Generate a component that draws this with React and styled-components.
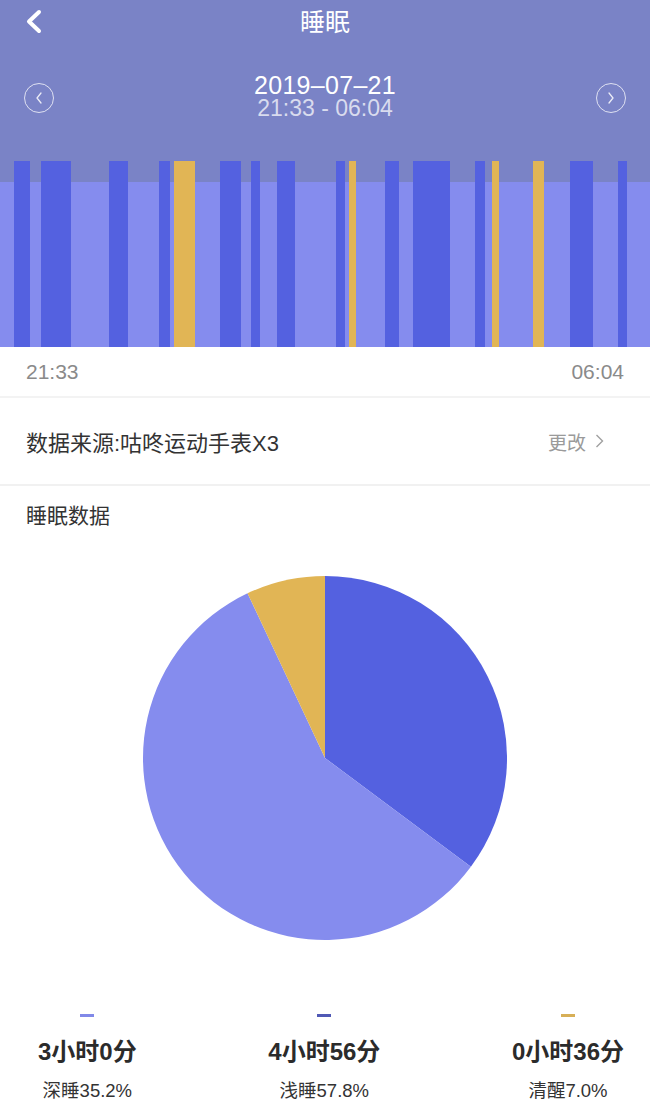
import React from "react";
import styled, { createGlobalStyle } from "styled-components";

const GlobalStyle = createGlobalStyle`
  html, body { margin: 0; padding: 0; background: #fff; }
  body { font-family: "Liberation Sans", "Noto Sans CJK SC", sans-serif; }
  * { box-sizing: border-box; }
`;

const COLORS = {
  header: "#7A83C6",
  light: "#858CEE",
  deep: "#5461E0",
  awake: "#E1B555",
};

const Page = styled.div`
  width: 650px;
  min-height: 1112px;
  background: #fff;
`;

const Header = styled.header`
  background: ${COLORS.header};
  color: #fff;
`;

const NavBar = styled.div`
  height: 46px;
  display: grid;
  grid-template-columns: 1fr auto 1fr;
  align-items: center;
  padding: 0 24px;
`;

const BackButton = styled.button`
  width: 24px;
  height: 28px;
  padding: 0;
  border: 0;
  background: none;
  display: flex;
  align-items: center;
  justify-content: flex-start;
  justify-self: start;
  margin-top: -2px;
`;

const Title = styled.h1`
  margin: 0;
  font-size: 25px;
  font-weight: 400;
  line-height: 30px;
  margin-top: -2px;
`;

const DateRow = styled.div`
  display: flex;
  align-items: center;
  justify-content: space-between;
  padding: 27px 24px 42px;
`;

const CircleButton = styled.button`
  width: 30px;
  height: 30px;
  margin-top: 4px;
  padding: 0;
  border: 1.2px solid rgba(255, 255, 255, 0.75);
  border-radius: 50%;
  background: none;
  display: flex;
  align-items: center;
  justify-content: center;
`;

const DateBlock = styled.div`
  display: flex;
  flex-direction: column;
  align-items: center;
`;

const DateText = styled.div`
  font-size: 25px;
  line-height: 24px;
  letter-spacing: 0.3px;
`;

const TimeText = styled.div`
  font-size: 23px;
  line-height: 22px;
  color: rgba(255, 255, 255, 0.72);
`;

const ChartSvg = styled.svg`
  display: block;
  width: 650px;
  height: 186px;
`;

const TimeRow = styled.div`
  height: 51px;
  display: flex;
  align-items: center;
  justify-content: space-between;
  padding: 0 26px 0 26px;
  font-size: 21px;
  color: #8a8a8a;
  border-bottom: 2px solid #f3f3f3;
`;

const SourceRow = styled.div`
  height: 88px;
  display: flex;
  align-items: center;
  justify-content: space-between;
  padding: 0 46px 0 26px;
  border-bottom: 2px solid #f1f1f1;
`;

const SourceText = styled.span`
  font-size: 22px;
  color: #333;
`;

const ChangeLink = styled.span`
  display: flex;
  align-items: center;
  gap: 9px;
  font-size: 19px;
  color: #9a9a9a;
`;

const SectionTitle = styled.h2`
  margin: 0;
  padding: 15px 26px 0;
  font-size: 21px;
  line-height: 30px;
  font-weight: 400;
  color: #333;
`;

const PieWrap = styled.div`
  display: flex;
  justify-content: center;
  margin-top: 45px;
`;

const Legend = styled.div`
  display: flex;
  justify-content: space-between;
  padding: 74px 26px 0 38px;
`;

const LegendItem = styled.div`
  display: flex;
  flex-direction: column;
  align-items: center;
`;

const Dash = styled.span`
  width: 14px;
  height: 3px;
  background: ${(p) => p.$color};
`;

const Value = styled.div`
  margin-top: 20px;
  font-size: 24px;
  line-height: 30px;
  font-weight: 700;
  color: #2b2b2b;
`;

const Label = styled.div`
  margin-top: 12px;
  font-size: 18.5px;
  line-height: 24px;
  color: #333;
`;

const bars = [
  [14, 30, "deep"], [41, 71, "deep"], [109, 128, "deep"], [159, 170, "deep"],
  [174, 195, "awake"], [220, 241, "deep"], [251, 260, "deep"], [277, 295, "deep"],
  [336, 345, "deep"], [349, 356, "awake"], [385, 399, "deep"], [413, 450, "deep"],
  [475, 485, "deep"], [492, 499, "awake"], [533, 544, "awake"], [570, 593, "deep"],
  [618, 627, "deep"],
];

const slices = [
  { pct: 35.2, color: COLORS.deep },
  { pct: 57.8, color: COLORS.light },
  { pct: 7.0, color: COLORS.awake },
];

function pieSlices(r) {
  let start = 0;
  return slices.map((s) => {
    const end = start + (s.pct / 100) * 360;
    const p = (a) => {
      const rad = (a * Math.PI) / 180;
      return [r + r * Math.sin(rad), r - r * Math.cos(rad)];
    };
    const [x1, y1] = p(start);
    const [x2, y2] = p(end);
    const large = end - start > 180 ? 1 : 0;
    const d = `M${r},${r} L${x1},${y1} A${r},${r} 0 ${large} 1 ${x2},${y2} Z`;
    start = end;
    return { d, color: s.color };
  });
}

const legend = [
  { color: "#8189E8", value: "3小时0分", label: "深睡35.2%" },
  { color: "#5059B5", value: "4小时56分", label: "浅睡57.8%" },
  { color: "#D7AF57", value: "0小时36分", label: "清醒7.0%" },
];

export default function App() {
  const R = 182;
  return (
    <Page>
      <GlobalStyle />
      <Header>
        <NavBar>
          <BackButton aria-label="返回">
            <svg width="20" height="26" viewBox="0 0 20 26">
              <path d="M15 3 L5 12.5 L15 22" fill="none" stroke="#fff" strokeWidth="4" strokeLinecap="round" strokeLinejoin="round" />
            </svg>
          </BackButton>
          <Title>睡眠</Title>
          <span />
        </NavBar>
        <DateRow>
          <CircleButton aria-label="前一天">
            <svg width="10" height="14" viewBox="0 0 10 14">
              <path d="M7 2 L3 7 L7 12" fill="none" stroke="rgba(255,255,255,0.85)" strokeWidth="1.3" strokeLinecap="round" />
            </svg>
          </CircleButton>
          <DateBlock>
            <DateText>2019–07–21</DateText>
            <TimeText>21:33 - 06:04</TimeText>
          </DateBlock>
          <CircleButton aria-label="后一天">
            <svg width="10" height="14" viewBox="0 0 10 14">
              <path d="M3 2 L7 7 L3 12" fill="none" stroke="rgba(255,255,255,0.85)" strokeWidth="1.3" strokeLinecap="round" />
            </svg>
          </CircleButton>
        </DateRow>
        <ChartSvg viewBox="0 0 650 186">
          <rect x="0" y="21" width="650" height="165" fill={COLORS.light} />
          {bars.map(([a, b, t], i) => (
            <rect key={i} x={a} y="0" width={b - a} height="186" fill={COLORS[t]} />
          ))}
        </ChartSvg>
      </Header>
      <TimeRow>
        <span>21:33</span>
        <span>06:04</span>
      </TimeRow>
      <SourceRow>
        <SourceText>数据来源:咕咚运动手表X3</SourceText>
        <ChangeLink>
          更改
          <svg width="9" height="16" viewBox="0 0 9 16">
            <path d="M1.5 2 L7.5 8 L1.5 14" fill="none" stroke="#a0a0a0" strokeWidth="1.4" />
          </svg>
        </ChangeLink>
      </SourceRow>
      <SectionTitle>睡眠数据</SectionTitle>
      <PieWrap>
        <svg width={R * 2} height={R * 2} viewBox={`0 0 ${R * 2} ${R * 2}`}>
          {pieSlices(R).map((s, i) => (
            <path key={i} d={s.d} fill={s.color} />
          ))}
        </svg>
      </PieWrap>
      <Legend>
        {legend.map((l) => (
          <LegendItem key={l.label}>
            <Dash $color={l.color} />
            <Value>{l.value}</Value>
            <Label>{l.label}</Label>
          </LegendItem>
        ))}
      </Legend>
    </Page>
  );
}
